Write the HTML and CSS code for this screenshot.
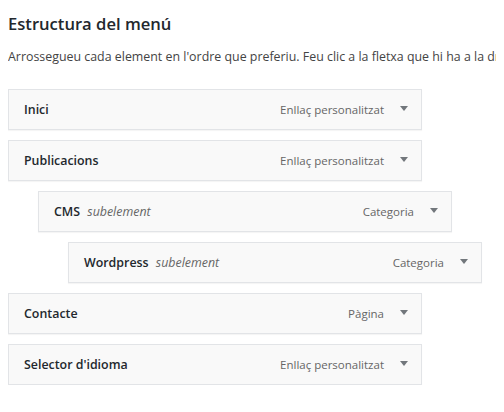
FILE: index.html
```html
<!DOCTYPE html>
<html lang="ca">
<head>
<meta charset="utf-8">
<title>Estructura del menú</title>
<link rel="stylesheet" href="styles.css">
</head>
<body>
<h2 class="title">Estructura del menú</h2>
<p class="desc">Arrossegueu cada element en l'ordre que preferiu. Feu clic a la fletxa que hi ha a la dreta de l'element per mostrar més opcions de configuració.</p>
<ul class="menu">
  <li class="item depth-0">
    <span class="item-title">Inici</span>
    <span class="item-type">Enllaç personalitzat</span>
    <span class="arrow"></span>
  </li>
  <li class="item depth-0">
    <span class="item-title">Publicacions</span>
    <span class="item-type">Enllaç personalitzat</span>
    <span class="arrow"></span>
  </li>
  <li class="item depth-1">
    <span class="item-title">CMS <em class="sub">subelement</em></span>
    <span class="item-type">Categoria</span>
    <span class="arrow"></span>
  </li>
  <li class="item depth-2">
    <span class="item-title">Wordpress <em class="sub">subelement</em></span>
    <span class="item-type">Categoria</span>
    <span class="arrow"></span>
  </li>
  <li class="item depth-0">
    <span class="item-title">Contacte</span>
    <span class="item-type">Pàgina</span>
    <span class="arrow"></span>
  </li>
  <li class="item depth-0">
    <span class="item-title">Selector d'idioma</span>
    <span class="item-type">Enllaç personalitzat</span>
    <span class="arrow"></span>
  </li>
</ul>
</body>
</html>
```
FILE: styles.css
```css
html, body {
  background: #ffffff;
}
body {
  margin: 8px;
  font-family: "Open Sans", "Noto Sans", sans-serif;
  color: #23282d;
  overflow: hidden;
}
.title {
  margin: 5px 0 0;
  font-size: 16.6px;
  line-height: 22px;
  font-weight: 600;
  color: #23282d;
}
.desc {
  margin: 13px 0 0;
  font-size: 12.4px;
  line-height: 18px;
  color: #444;
  white-space: nowrap;
  overflow: hidden;
}
.menu {
  list-style: none;
  margin: 23px 0 0;
  padding: 0;
  display: flex;
  flex-direction: column;
  gap: 10px;
}
.item {
  box-sizing: border-box;
  width: 414px;
  height: 41px;
  border: 1px solid #e2e4e7;
  background: #f9f9f9;
  box-shadow: 0 1px 1px rgba(0,0,0,0.04);
  display: flex;
  align-items: center;
  padding: 0 13px 0 15px;
}
.depth-1 { margin-left: 30px; }
.depth-2 { margin-left: 60px; }
.item-title {
  flex: 1;
  font-size: 12.4px;
  font-weight: 600;
  color: #23282d;
}
.sub {
  font-weight: 400;
  color: #666;
  margin-left: 4px;
}
.item-type {
  font-size: 11.5px;
  color: #666;
}
.arrow {
  width: 0;
  height: 0;
  margin-left: 16px;
  border-left: 4px solid transparent;
  border-right: 4px solid transparent;
  border-top: 5px solid #72777c;
  margin-top: -2px;
}
```
